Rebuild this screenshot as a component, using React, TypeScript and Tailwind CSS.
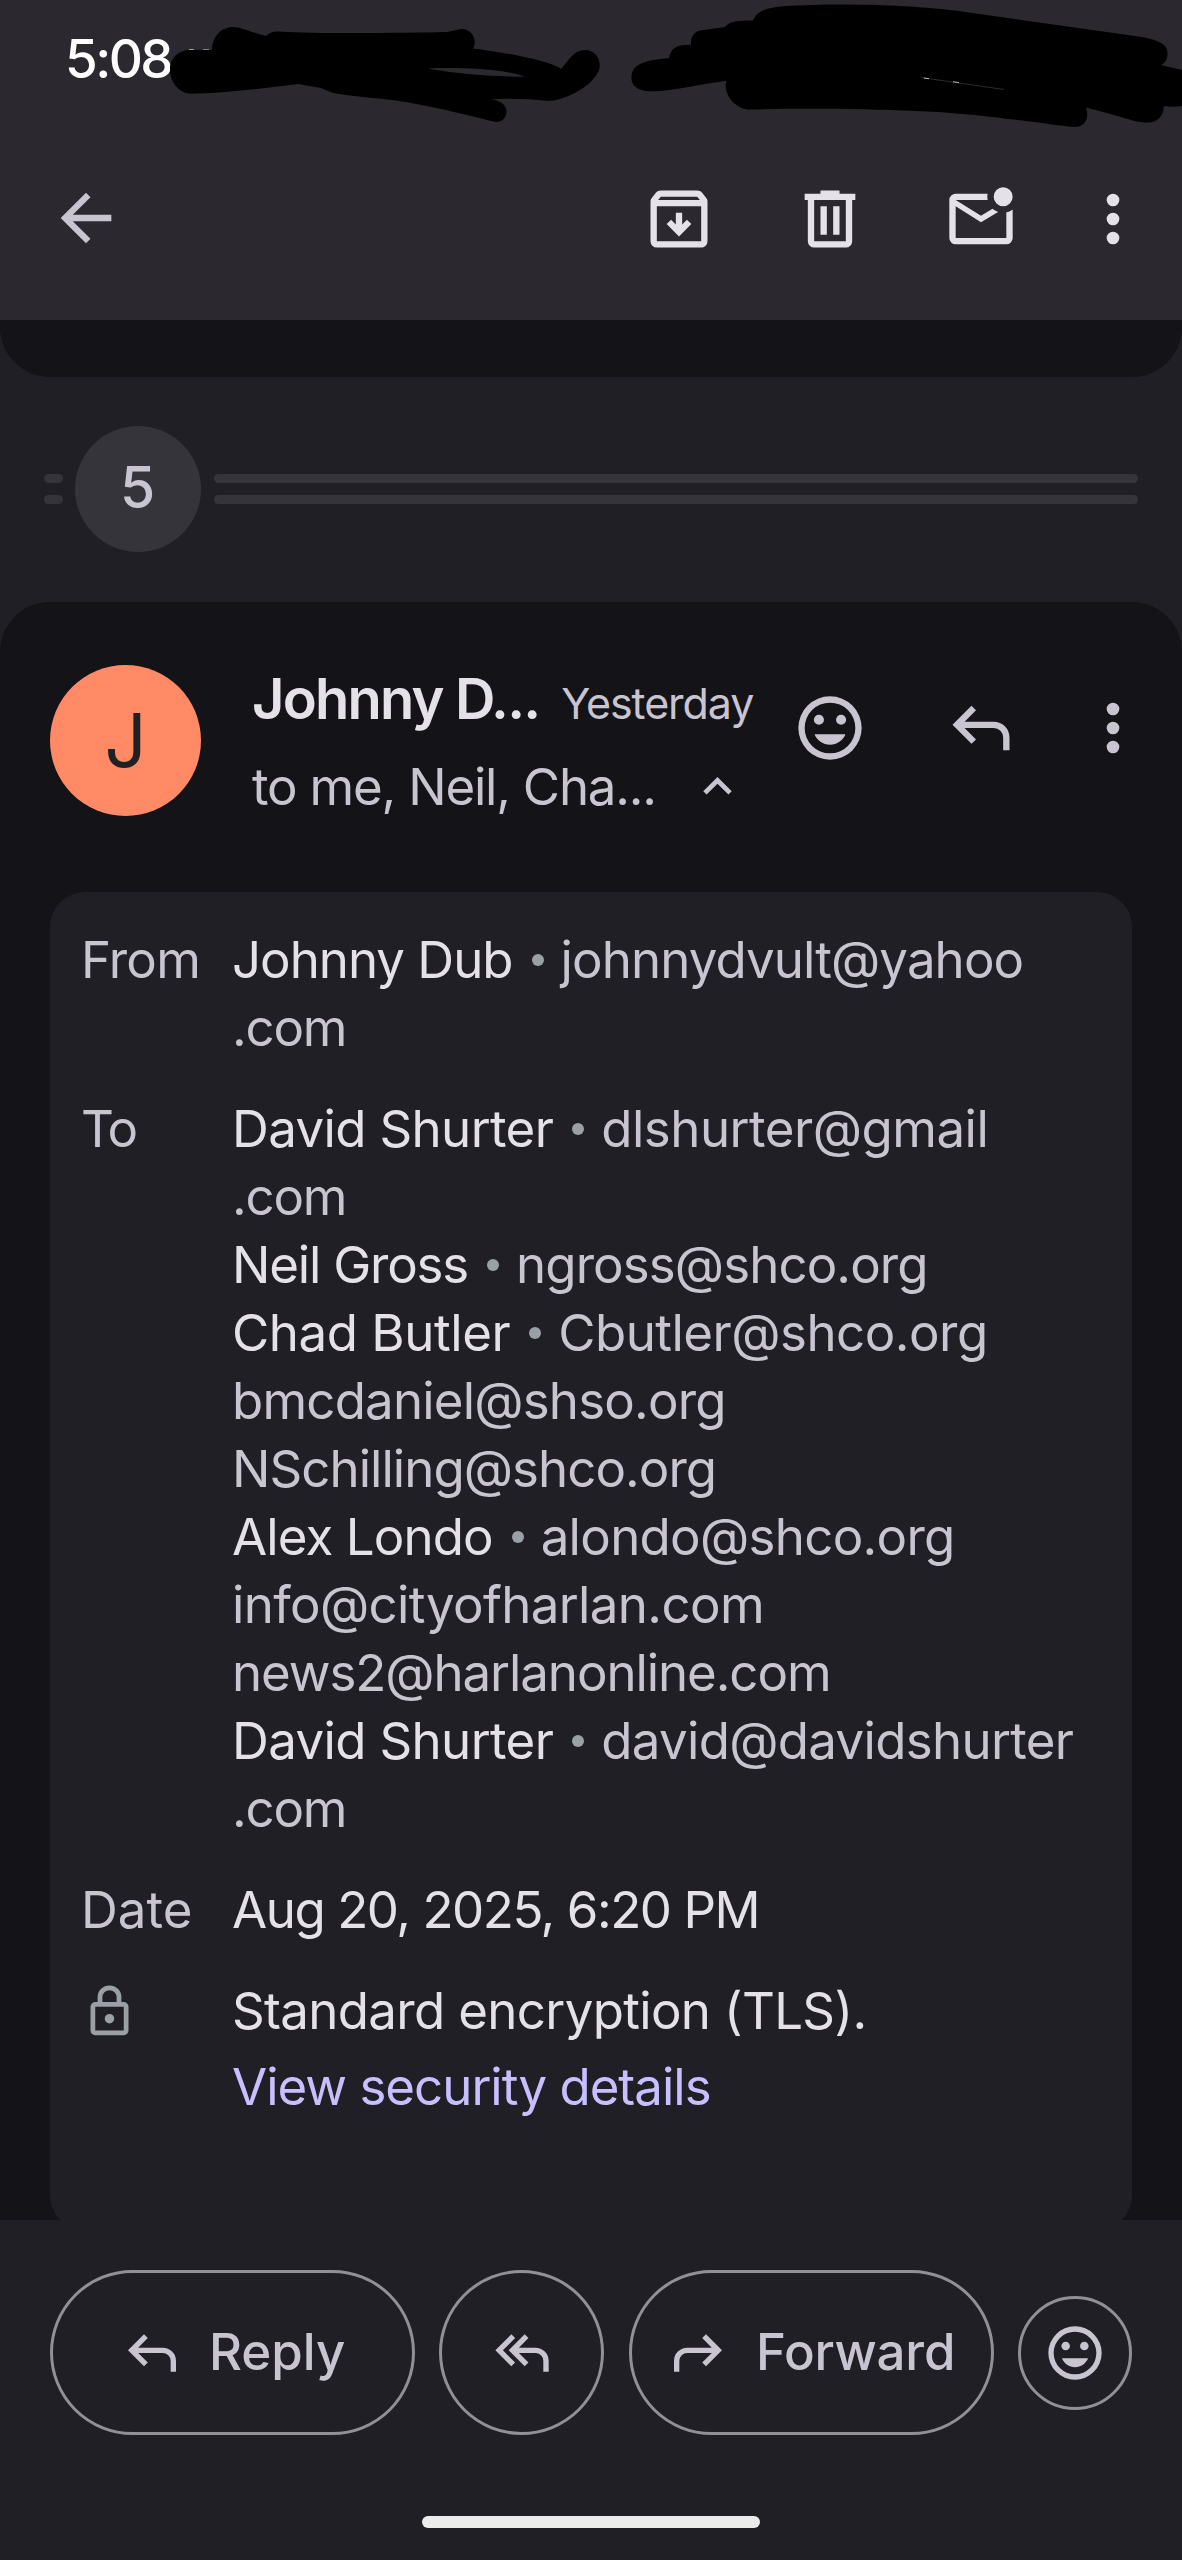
import { clsx } from 'clsx';

const ICONS = {
    back: 'M20 11H7.83l5.59-5.59L12 4l-8 8 8 8 1.41-1.41L7.83 13H20v-2Z',
    archive:
        'M12 17.5l3.9-3.9-1.4-1.4-1.5 1.5V10h-2v3.7l-1.5-1.5-1.4 1.4 3.9 3.9ZM5 8v11h14V8H5Zm0 13q-.825 0-1.412-.587T3 19V6.525q0-.35.112-.675t.338-.6l1.25-1.525q.275-.35.687-.538T6.25 3h11.5q.45 0 .863.188t.687.537l1.25 1.525q.225.275.338.6t.112.675V19q0 .825-.587 1.413T19 21H5Zm.4-15h13.2l-.85-1H6.25L5.4 6Z',
    trash: 'M7 21q-.825 0-1.412-.587T5 19V6H4V4h5V3h6v1h5v2h-1v13q0 .825-.587 1.413T17 21H7ZM17 6H7v13h10V6ZM9 17h2V8H9v9Zm4 0h2V8h-2v9Z',
    unread: 'M4 20q-.825 0-1.412-.587T2 18V6q0-.825.588-1.412T4 4h10.1q-.1.5-.1 1t.1 1H4l8 5 3.65-2.275q.375.35.813.613.437.262.937.437L12 13 4 8v10h16V9.9q.575-.125 1.075-.35.5-.225.925-.55v9q0 .825-.587 1.413T20 20H4ZM19 8a3 3 0 1 1 0-6 3 3 0 0 1 0 6Z',
    more: 'M12 8a2 2 0 1 0 0-4 2 2 0 0 0 0 4Zm0 6a2 2 0 1 0 0-4 2 2 0 0 0 0 4Zm0 6a2 2 0 1 0 0-4 2 2 0 0 0 0 4Z',
    emoji: 'M12 2a10 10 0 1 0 0 20 10 10 0 0 0 0-20Zm0 18a8 8 0 1 1 0-16 8 8 0 0 1 0 16ZM15.5 11a1.6 1.6 0 1 0 0-3.2 1.6 1.6 0 0 0 0 3.2Zm-7 0a1.6 1.6 0 1 0 0-3.2 1.6 1.6 0 0 0 0 3.2ZM12 17.3c2.2 0 4.1-1.3 4.9-3.3H7.1c.8 2 2.7 3.3 4.9 3.3Z',
    reply: 'M19 19v-4q0-1.25-.875-2.125T16 12H6.825l3.6 3.6L9 17l-6-6 6-6 1.425 1.4-3.6 3.6H16q2.075 0 3.538 1.463T21 15v4h-2Z',
    replyAll:
        'M8 17l-6-6 6-6 1.425 1.4-4.6 4.6 4.6 4.6L8 17Zm12 2v-4q0-1.25-.875-2.125T17 12h-6.175l3.6 3.6L13 17l-6-6 6-6 1.425 1.4-3.6 3.6H17q2.075 0 3.538 1.463T22 15v4h-2Z',
    forward: 'M5 19v-4q0-1.25.875-2.125T8 12h9.175l-3.6 3.6L15 17l6-6-6-6-1.425 1.4 3.6 3.6H8q-2.075 0-3.538 1.463T3 15v4h2Z',
    chevronUp: 'M12 8l-6 6 1.41 1.41L12 10.83l4.59 4.58L18 14z',
    lock: 'M18 8h-1V6A5 5 0 0 0 7 6v2H6a2 2 0 0 0-2 2v10a2 2 0 0 0 2 2h12a2 2 0 0 0 2-2V10a2 2 0 0 0-2-2ZM9 6a3 3 0 0 1 6 0v2H9V6Zm9 14H6V10h12v10Zm-6-3a2 2 0 1 0 0-4 2 2 0 0 0 0 4Z',
};

function Icon({ name, className }: { name: keyof typeof ICONS; className?: string }) {
    return (
        <svg viewBox="0 0 24 24" fill="currentColor" fillRule="evenodd" className={clsx('shrink-0', className)}>
            <path d={ICONS[name]} />
        </svg>
    );
}

interface Recipient {
    name?: string;
    email: string;
    nameClass?: string;
    emailClass?: string;
    rest?: string;
}

const FROM: Recipient[] = [
    { name: 'Johnny Dub', nameClass: 'tracking-[-1px]', email: 'johnnydvult@yahoo', emailClass: 'tracking-[-0.9px]', rest: '.com' },
];

const TO: Recipient[] = [
    { name: 'David Shurter', nameClass: 'tracking-[-0.63px]', email: 'dlshurter@gmail', emailClass: 'tracking-[-0.5px]', rest: '.com' },
    { name: 'Neil Gross', nameClass: 'tracking-[-1.2px]', email: 'ngross@shco.org', emailClass: 'tracking-[-0.9px]' },
    { name: 'Chad Butler', nameClass: 'tracking-[-0.45px]', email: 'Cbutler@shco.org', emailClass: 'tracking-[-0.5px]' },
    { email: 'bmcdaniel@shso.org', emailClass: 'tracking-[-0.8px]' },
    { email: 'NSchilling@shco.org', emailClass: 'tracking-[-0.95px]' },
    { name: 'Alex Londo', nameClass: 'tracking-[-0.9px]', email: 'alondo@shco.org', emailClass: 'tracking-[-0.7px]' },
    { email: 'info@cityofharlan.com', emailClass: 'tracking-[-0.62px]' },
    { email: 'news2@harlanonline.com', emailClass: 'tracking-[-1.08px]' },
    { name: 'David Shurter', nameClass: 'tracking-[-0.63px]', email: 'david@davidshurter', emailClass: 'tracking-[-0.68px]', rest: '.com' },
];

function RecipientLines({ items }: { items: Recipient[] }) {
    return (
        <div>
            {items.map((r) => (
                <div key={r.email} className="text-[#c9c5d0]">
                    <div className="flex h-[68px] items-center whitespace-nowrap">
                        {r.name && (
                            <>
                                <span className={clsx('text-[#e5e1e9]', r.nameClass)}>{r.name}</span>
                                <span className="mr-[17px] ml-[19px] size-[12px] rounded-full bg-[#9aa0a6]" />
                            </>
                        )}
                        <span className={r.emailClass}>{r.email}</span>
                    </div>
                    {r.rest && <div className="h-[68px] tracking-[-1.2px]">{r.rest}</div>}
                </div>
            ))}
        </div>
    );
}

function StatusBar() {
    return (
        <div className="relative flex h-[118px] items-center pl-[65px]">
            <span className="mt-[2px] text-[53px] font-medium tracking-[-2.6px] text-white">5:08</span>
            <svg className="absolute top-0 left-0 h-[140px] w-[1182px]" viewBox="0 0 1182 140">
                <path d="M189 49.6h5M203 49.8h6" stroke="#aaa" strokeWidth="1" />
                <path
                    fillRule="evenodd"
                    d="M170 69C170 58 179 50 190 50L212 50C212 36 222 27 233 27C240 27 250 32 266 36C270 32 274 31 280 31.5C320 34 400 33 447 32C454 31 458 29 463 29C472 30 478 40 473 48.5C500 52 550 60 561 69C568 62 573 50 585 50C596 50 602 61 599 70C592 88 562 101 548 101C530 99 506 98 490 99.5C500 100 507 105 506.500 112C506 119 501 122 496 122C485 120 430 104 383 99C365 97 347 96 332 92.500C327 91 324 89 321 88L298 84C260 89 220 93 192 93.700C179 94 170 82 170 69ZM428 68.500C450 73 495 77 525 76.700C505 69 460 67 428 68.500Z"
                />
                <path d="M631.500 78C632 65 640 61 669 58C671 49 676 44 691 45C690 35 696 30 704 30L725 27C729 22 734 20.500 753 20.500C757 12 763 8 785 6C850 2 930 6 971 12.700L1064 26L1142 37C1163 41 1168 46 1167.500 55C1167 60 1165 63 1161 65L1182 70V106C1176 107 1170 107 1164 106C1163 118 1156 123 1147 122.500C1137 123 1131 119 1086 107.500C1090 119 1084 127 1075 127C1058 126 1030 121 1008 119C980 115 945 112 915 111C870 109 800 108 750 109.600C737 110 722 95 726.500 80.700C700 84 672 91 654 91.300C641 92 631 87 631.500 78Z" />
                <path d="M921 77.500L1004 89.500" stroke="#2b292f" strokeWidth="1" />
                <path d="M924 78l5 .7M953 81.800l6 .8" stroke="#bbb" strokeWidth="1" />
            </svg>
        </div>
    );
}

function Toolbar() {
    return (
        <div className="flex h-[202px] items-center pr-[31px] pl-[48px] text-[#e5e1e9]">
            <Icon name="back" className="mb-[2px] size-[76px] text-[#c9c5d0]" />
            <div className="ml-auto flex items-center">
                <Icon name="archive" className="mr-[75px] size-[76px]" />
                <Icon name="trash" className="mr-[75px] size-[76px]" />
                <Icon name="unread" className="mr-[56px] size-[76px]" />
                <Icon name="more" className="size-[76px]" />
            </div>
        </div>
    );
}

function CollapsedThread({ count }: { count: number }) {
    return (
        <div className="flex h-[224px] items-center px-[44px]">
            <div className="flex w-[19px] flex-col gap-[12px]">
                <div className="h-[9px] rounded-full bg-[#36343b]" />
                <div className="h-[9px] rounded-full bg-[#36343b]" />
            </div>
            <div className="mr-[13px] ml-[12px] flex size-[126px] items-center justify-center rounded-full bg-[#36343b] text-[57px] font-medium text-[#c9c5d0]">
                <span className="mr-[1px] mb-[2px]">{count}</span>
            </div>
            <div className="flex flex-1 flex-col gap-[12px]">
                <div className="h-[9px] rounded-full bg-[#36343b]" />
                <div className="h-[9px] rounded-full bg-[#36343b]" />
            </div>
        </div>
    );
}

function MessageHeader() {
    return (
        <div className="flex h-[290px] items-start pr-[31px] pl-[50px] text-[#c9c5d0]">
            <div className="mt-[63px] flex size-[151px] shrink-0 items-center justify-center rounded-full bg-[#ff8a65] text-[74px] text-[#202124]">
                J
            </div>
            <div className="mt-[62px] ml-[51px] whitespace-nowrap">
                <div className="flex h-[70px] items-baseline leading-[70px]">
                    <span className="text-[56px] font-semibold tracking-[-1.8px] text-[#e5e1e9]">Johnny D...</span>
                    <span className="ml-[22px] text-[43px] tracking-[-1.1px]">Yesterday</span>
                </div>
                <div className="mt-[18px] flex h-[70px] items-center text-[51px]">
                    <span className="tracking-[-1.2px]">to me, Neil, Cha...</span>
                    <Icon name="chevronUp" className="mb-[2px] ml-[33px] size-[57px]" />
                </div>
            </div>
            <div className="mt-[88px] ml-auto flex items-center">
                <Icon name="emoji" className="mr-[75px] size-[76px]" />
                <Icon name="reply" className="mr-[56px] size-[76px]" />
                <Icon name="more" className="size-[76px]" />
            </div>
        </div>
    );
}

function MessageDetails() {
    return (
        <div className="mx-[50px] h-[1338px] rounded-[35px] bg-[#201f25] pt-[34px] pl-[31px] text-[51px] leading-[68px] text-[#c9c5d0]">
            <div className="grid grid-cols-[151px_1fr] gap-y-[33px]">
                <div className="tracking-[-0.8px]">From</div>
                <RecipientLines items={FROM} />
                <div className="tracking-[-2.5px]">To</div>
                <RecipientLines items={TO} />
                <div>Date</div>
                <div className="tracking-[-1.45px] text-[#e5e1e9]">Aug 20, 2025, 6:20 PM</div>
                <Icon name="lock" className="mt-[6px] size-[57px] text-[#9aa0a6]" />
                <div>
                    <div className="tracking-[-0.66px] text-[#e5e1e9]">Standard encryption (TLS).</div>
                    <div className="mt-[8px] tracking-[-1px] text-[#c8bfff]">View security details</div>
                </div>
            </div>
        </div>
    );
}

function ActionBar() {
    return (
        <div className="flex h-[340px] flex-col bg-[#201f25] px-[50px] pt-[50px] text-[51px] font-medium text-[#c9c5d0]">
            <div className="flex items-center">
                <button className="flex h-[165px] w-[365px] items-center rounded-full border-[3px] border-[#938f99] pl-[67px]">
                    <Icon name="reply" className="size-[64px]" />
                    <span className="ml-[25px]">Reply</span>
                </button>
                <button className="ml-[24px] flex size-[165px] items-center justify-center rounded-full border-[3px] border-[#938f99]">
                    <Icon name="replyAll" className="size-[64px]" />
                </button>
                <button className="ml-[25px] flex h-[165px] w-[365px] items-center rounded-full border-[3px] border-[#938f99] pl-[34px]">
                    <Icon name="forward" className="size-[64px]" />
                    <span className="ml-[26px] tracking-[-0.2px]">Forward</span>
                </button>
                <button className="ml-auto flex size-[114px] items-center justify-center rounded-full border-[3px] border-[#938f99]">
                    <Icon name="emoji" className="size-[64px]" />
                </button>
            </div>
            <div className="mt-[81px] h-[12px] w-[338px] self-center rounded-full bg-[#ececec]" />
        </div>
    );
}

export default function App() {
    return (
        <div className="flex h-[2560px] w-[1182px] flex-col overflow-hidden bg-[#201f25] font-['Inter',sans-serif]">
            <header className="h-[320px] shrink-0 bg-[#2b292f]">
                <StatusBar />
                <Toolbar />
            </header>
            <main className="h-[1900px] shrink-0 overflow-hidden">
                <div className="h-[57px] rounded-b-[50px] bg-[#141318]" />
                <CollapsedThread count={5} />
                <section className="mt-[1px] h-[1700px] rounded-t-[50px] bg-[#141318]">
                    <MessageHeader />
                    <MessageDetails />
                </section>
            </main>
            <ActionBar />
        </div>
    );
}
